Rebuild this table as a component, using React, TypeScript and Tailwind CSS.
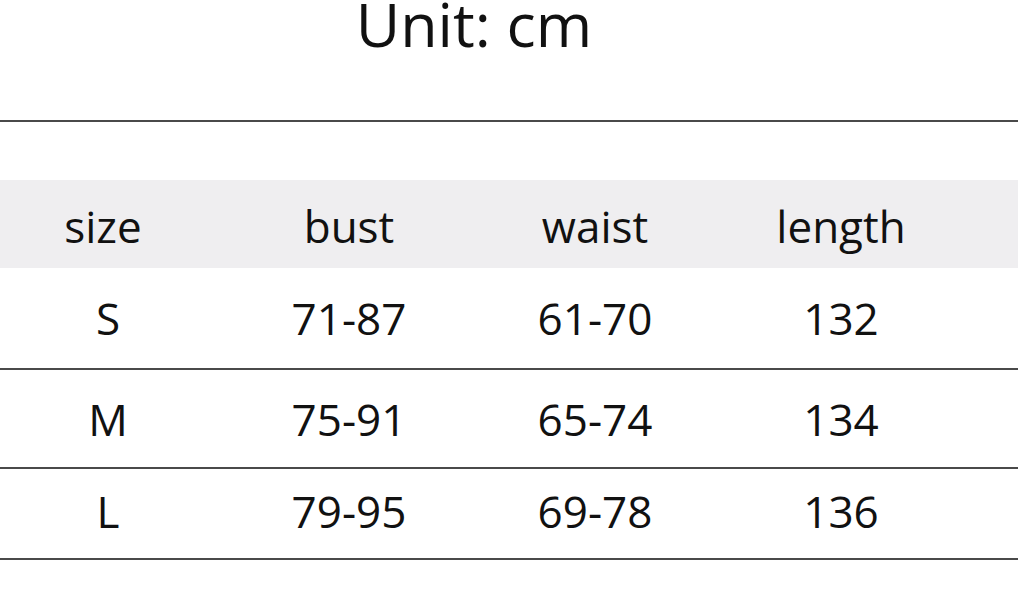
const rows = [
  ["S", "71-87", "61-70", "132"],
  ["M", "75-91", "65-74", "134"],
  ["L", "79-95", "69-78", "136"],
];

const heads = ["size", "bust", "waist", "length"];

export default function App() {
  return (
    <div
      className="w-[1018px] h-[604px] bg-white text-[#111] overflow-hidden"
      style={{ fontFamily: '"Open Sans", "Noto Sans", sans-serif' }}
    >
      <div className="h-[120px] flex justify-center">
        <h1 className="text-[61px] leading-[48px] mr-[70px] font-normal">Unit: cm</h1>
      </div>
      <div className="h-[2px] bg-[#4a4a4a]" />
      <div className="h-[58px]" />
      <div className="bg-[#efeef0] h-[88px]">
        <div className="ml-[-20px] w-[984px] grid grid-cols-4 h-full items-center text-[44px] leading-none pt-[4px]">
          {heads.map((h) => (
            <div key={h} className="text-center">
              {h}
            </div>
          ))}
        </div>
      </div>
      {rows.map((r, i) => (
        <div key={r[0]}>
          <div
            className={`ml-[-20px] w-[984px] grid grid-cols-4 items-center text-[44px] leading-none ${
              i === 0 ? "h-[100px]" : i === 1 ? "h-[97px]" : "h-[89px] pb-[6px]"
            }`}
          >
            {r.map((c, j) => (
              <div key={j} className={`text-center ${j === 0 ? "pl-[10px]" : ""}`}>
                {c}
              </div>
            ))}
          </div>
          <div className="h-[2px] bg-[#4a4a4a]" />
        </div>
      ))}
    </div>
  );
}
